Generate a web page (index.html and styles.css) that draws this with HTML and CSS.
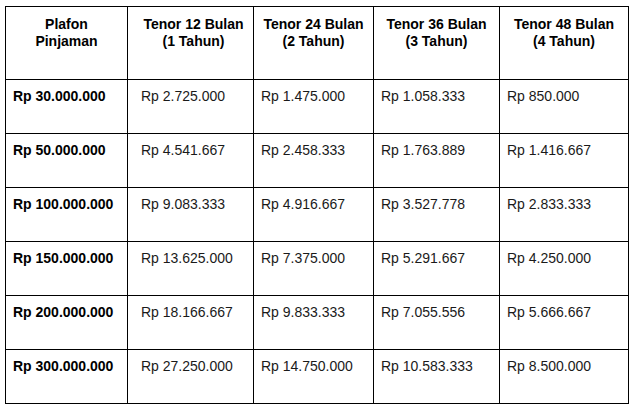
FILE: index.html
```html
<!DOCTYPE html>
<html lang="id">
<head>
<meta charset="utf-8">
<title>Tabel Angsuran</title>
<link rel="stylesheet" href="styles.css">
</head>
<body>
<table class="loan-table">
  <colgroup>
    <col class="c1"><col class="c2"><col class="c3"><col class="c4"><col class="c5">
  </colgroup>
  <thead>
    <tr>
      <th>Plafon<br>Pinjaman</th>
      <th class="wide-pad">Tenor 12 Bulan<br>(1 Tahun)</th>
      <th>Tenor 24 Bulan<br>(2 Tahun)</th>
      <th>Tenor 36 Bulan<br>(3 Tahun)</th>
      <th>Tenor 48 Bulan<br>(4 Tahun)</th>
    </tr>
  </thead>
  <tbody>
    <tr><td class="amount">Rp 30.000.000</td><td class="wide-pad">Rp 2.725.000</td><td>Rp 1.475.000</td><td>Rp 1.058.333</td><td>Rp 850.000</td></tr>
    <tr><td class="amount">Rp 50.000.000</td><td class="wide-pad">Rp 4.541.667</td><td>Rp 2.458.333</td><td>Rp 1.763.889</td><td>Rp 1.416.667</td></tr>
    <tr><td class="amount">Rp 100.000.000</td><td class="wide-pad">Rp 9.083.333</td><td>Rp 4.916.667</td><td>Rp 3.527.778</td><td>Rp 2.833.333</td></tr>
    <tr><td class="amount">Rp 150.000.000</td><td class="wide-pad">Rp 13.625.000</td><td>Rp 7.375.000</td><td>Rp 5.291.667</td><td>Rp 4.250.000</td></tr>
    <tr><td class="amount">Rp 200.000.000</td><td class="wide-pad">Rp 18.166.667</td><td>Rp 9.833.333</td><td>Rp 7.055.556</td><td>Rp 5.666.667</td></tr>
    <tr><td class="amount">Rp 300.000.000</td><td class="wide-pad">Rp 27.250.000</td><td>Rp 14.750.000</td><td>Rp 10.583.333</td><td>Rp 8.500.000</td></tr>
  </tbody>
</table>
</body>
</html>
```
FILE: styles.css
```css
html, body {
  margin: 0;
  padding: 0;
  background: #ffffff;
}

body {
  font-family: "Liberation Sans", Arial, sans-serif;
  font-size: 14px;
  line-height: 17px;
  color: #000000;
}

.loan-table {
  margin: 6px 0 0 5px;
  width: 624px;
  table-layout: fixed;
  border-collapse: separate;
  border-spacing: 0;
  border-left: 1px solid #000;
  border-top: 1px solid #000;
}

.c1 { width: 122px; }
.c2 { width: 126px; }
.c3 { width: 120px; }
.c4 { width: 126px; }
.c5 { width: 129px; }

.loan-table th,
.loan-table td {
  box-sizing: border-box;
  border-right: 1px solid #000;
  border-bottom: 1px solid #000;
  vertical-align: top;
  padding: 8px 7px 0 7px;
  white-space: nowrap;
}

.loan-table th {
  height: 73px;
  padding-top: 9px;
  font-weight: bold;
  text-align: center;
}

.loan-table td {
  height: 54px;
  text-align: left;
  font-weight: normal;
  color: #1a1a1a;
}

.loan-table td.amount {
  font-weight: bold;
  color: #000;
}

.loan-table .wide-pad {
  padding-left: 13px;
}
```
